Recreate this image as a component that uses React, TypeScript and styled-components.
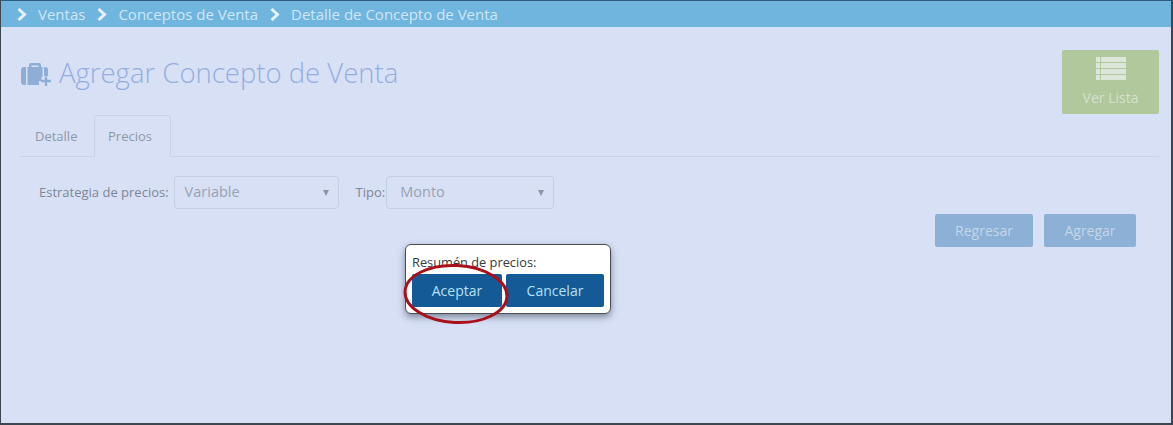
import React from 'react';
import styled, { createGlobalStyle } from 'styled-components';

const GlobalStyle = createGlobalStyle`
  html, body {
    margin: 0;
    padding: 0;
    background: #d7e0f5;
  }
  body {
    font-family: "Open Sans", "Liberation Sans", sans-serif;
  }
`;

const Frame = styled.div`
  border: 1px solid #3c4650;
  border-bottom-width: 2px;
  border-right-width: 2px;
  border-top-color: #2f5f7c;
  box-sizing: border-box;
  height: 425px;
  overflow: hidden;
  position: relative;
  width: 1173px;
`;

const Breadcrumb = styled.nav`
  align-items: center;
  background: #70b5de;
  color: #cfe6f6;
  display: flex;
  font-size: 15px;
  height: 26px;
  padding-left: 15px;
`;

const Crumb = styled.span`
  align-items: center;
  display: flex;
  gap: 11px;
  margin-right: 11px;
`;

const Chevron = styled.svg`
  display: block;
  height: 13px;
  width: 11px;
`;

const Content = styled.main`
  padding: 23px 12px 0 19px;
`;

const Header = styled.header`
  align-items: flex-start;
  display: flex;
  justify-content: space-between;
  height: 65px;
`;

const Title = styled.h1`
  align-items: center;
  color: #96aedd;
  display: flex;
  font-size: 27.5px;
  font-weight: 300;
  gap: 8px;
  height: 46px;
  line-height: 46px;
  margin: 0 0 0 1px;
`;

const TitleIcon = styled.svg`
  display: block;
  height: 23px;
  margin-top: 3px;
  width: 30px;
`;

const ListButton = styled.button`
  align-items: center;
  background: #b1c79c;
  border: 0;
  border-radius: 2px;
  color: #d5e0cd;
  display: flex;
  flex-direction: column;
  font-family: inherit;
  font-size: 14px;
  height: 64px;
  padding: 7px 0 0;
  width: 97px;
`;

const ListLabel = styled.span`
  line-height: 19px;
  margin-top: 7px;
`;

const Tabs = styled.div`
  border-bottom: 1px solid #cad3e6;
  display: flex;
  height: 41px;
`;

const Tab = styled.div<{ $active?: boolean }>`
  border: 1px solid ${({ $active }) => ($active ? '#cad3e6' : 'transparent')};
  border-bottom-color: ${({ $active }) => ($active ? '#d7e0f5' : 'transparent')};
  border-radius: 3px 3px 0 0;
  box-sizing: border-box;
  color: #8f98a8;
  font-size: 13px;
  height: 42px;
  line-height: 40px;
  padding: 0 ${({ $active }) => ($active ? 13 : 14)}px;
  width: ${({ $active }) => ($active ? '77px' : '74px')};
  white-space: nowrap;
`;

const FilterRow = styled.div`
  align-items: center;
  display: flex;
  height: 33px;
  margin-top: 19px;
  padding-left: 19px;
`;

const Label = styled.label<{ $gap: number }>`
  color: #7e8797;
  font-size: 13px;
  margin-right: ${({ $gap }) => $gap}px;
  padding-bottom: 2px;
  white-space: nowrap;
`;

const SelectBox = styled.div<{ $width: number; $gap?: number; $inset: number }>`
  align-items: center;
  border: 1px solid #c5cfe4;
  border-radius: 4px;
  box-sizing: border-box;
  color: #99a2b3;
  display: flex;
  font-size: 14.5px;
  height: 33px;
  justify-content: space-between;
  margin-right: ${({ $gap }) => $gap ?? 0}px;
  padding: 0 9px 2px ${({ $inset }) => $inset}px;
  width: ${({ $width }) => $width}px;
`;

const Caret = styled.span`
  border-left: 3px solid transparent;
  border-right: 3px solid transparent;
  border-top: 6px solid #8d95a5;
  height: 0;
  margin-top: 2px;
  width: 0;
`;

const Actions = styled.div`
  display: flex;
  gap: 11px;
  justify-content: flex-end;
  margin-right: 23px;
  margin-top: 5px;
`;

const ActionButton = styled.button<{ $width: number }>`
  background: #8cb0d6;
  border: 0;
  border-radius: 2px;
  color: #c4d6ea;
  font-family: inherit;
  font-size: 14px;
  height: 33px;
  padding: 0;
  width: ${({ $width }) => $width}px;
`;

const Dialog = styled.div`
  background: #fff;
  border: 1px solid #4a4f55;
  border-radius: 6px;
  box-shadow: 0 3px 7px rgba(50, 60, 80, 0.55);
  box-sizing: border-box;
  height: 70px;
  left: 404px;
  padding: 9px 6px 0;
  position: absolute;
  top: 243px;
  width: 206px;
`;

const DialogText = styled.div`
  color: #3a3a3a;
  font-size: 12.8px;
  height: 20px;
  line-height: 17px;
`;

const DialogButtons = styled.div`
  display: flex;
  gap: 4px;
`;

const DialogButton = styled.button<{ $width: number }>`
  background: #135a96;
  border: 0;
  border-radius: 2px;
  color: #b9e0f5;
  font-family: inherit;
  font-size: 14px;
  height: 33px;
  padding: 0;
  width: ${({ $width }) => $width}px;
`;

const Highlight = styled.svg`
  height: 70px;
  left: 399px;
  pointer-events: none;
  position: absolute;
  top: 257px;
  width: 114px;
`;

const ChevronIcon = () => (
  <Chevron viewBox="0 0 11 13">
    <path d="M2.5 1 L8.5 6.5 L2.5 12" fill="none" stroke="#e6f2fa" strokeWidth="3" />
  </Chevron>
);

const BriefcaseIcon = () => (
  <TitleIcon viewBox="0 0 30 23">
    <path
      d="M8 4V2a2 2 0 0 1 2-2h8a2 2 0 0 1 2 2v2h-2.4V2.4h-7.2V4zM3 4h2v18H3a3 3 0 0 1-3-3V7a3 3 0 0 1 3-3zM6.5 4h15v10h-1v4h-2.5v4H6.5zM23 4h1a3 3 0 0 1 3 3v6h-4z"
      fill="#8eaed6"
    />
    <path d="M23.8 13.5h2.4v3.3H30v2.4h-3.8V23h-2.4v-3.8H20v-2.4h3.8z" fill="#8eaed6" />
  </TitleIcon>
);

const ListIcon = () => (
  <svg width="30" height="24" viewBox="0 0 30 24">
    <g fill="#dce6da">
      <rect x="0" y="0" width="4" height="5" />
      <rect x="5" y="0" width="25" height="5" />
      <rect x="0" y="6" width="4" height="5" />
      <rect x="5" y="6" width="25" height="5" />
      <rect x="0" y="12" width="4" height="5" />
      <rect x="5" y="12" width="25" height="5" />
      <rect x="0" y="18" width="4" height="5" />
      <rect x="5" y="18" width="25" height="5" />
    </g>
  </svg>
);

export default function App() {
  return (
    <Frame>
      <GlobalStyle />
      <Breadcrumb>
        {['Ventas', 'Conceptos de Venta', 'Detalle de Concepto de Venta'].map((item) => (
          <Crumb key={item}>
            <ChevronIcon />
            {item}
          </Crumb>
        ))}
      </Breadcrumb>
      <Content>
        <Header>
          <Title>
            <BriefcaseIcon />
            Agregar Concepto de Venta
          </Title>
          <ListButton>
            <ListIcon />
            <ListLabel>Ver Lista</ListLabel>
          </ListButton>
        </Header>
        <Tabs>
          <Tab>Detalle</Tab>
          <Tab $active>Precios</Tab>
        </Tabs>
        <FilterRow>
          <Label $gap={5}>Estrategia de precios:</Label>
          <SelectBox $width={165} $gap={17} $inset={10}>
            Variable
            <Caret />
          </SelectBox>
          <Label $gap={1}>Tipo:</Label>
          <SelectBox $width={168} $inset={13}>
            Monto
            <Caret />
          </SelectBox>
        </FilterRow>
        <Actions>
          <ActionButton $width={98}>Regresar</ActionButton>
          <ActionButton $width={92}>Agregar</ActionButton>
        </Actions>
      </Content>
      <Dialog>
        <DialogText>Resumén de precios:</DialogText>
        <DialogButtons>
          <DialogButton $width={90}>Aceptar</DialogButton>
          <DialogButton $width={98}>Cancelar</DialogButton>
        </DialogButtons>
      </Dialog>
      <Highlight viewBox="0 0 114 70">
        <ellipse
          cx="56"
          cy="36"
          rx="51"
          ry="28.5"
          fill="none"
          stroke="#a8101c"
          strokeWidth="3"
          transform="rotate(3 56 36)"
        />
      </Highlight>
    </Frame>
  );
}
